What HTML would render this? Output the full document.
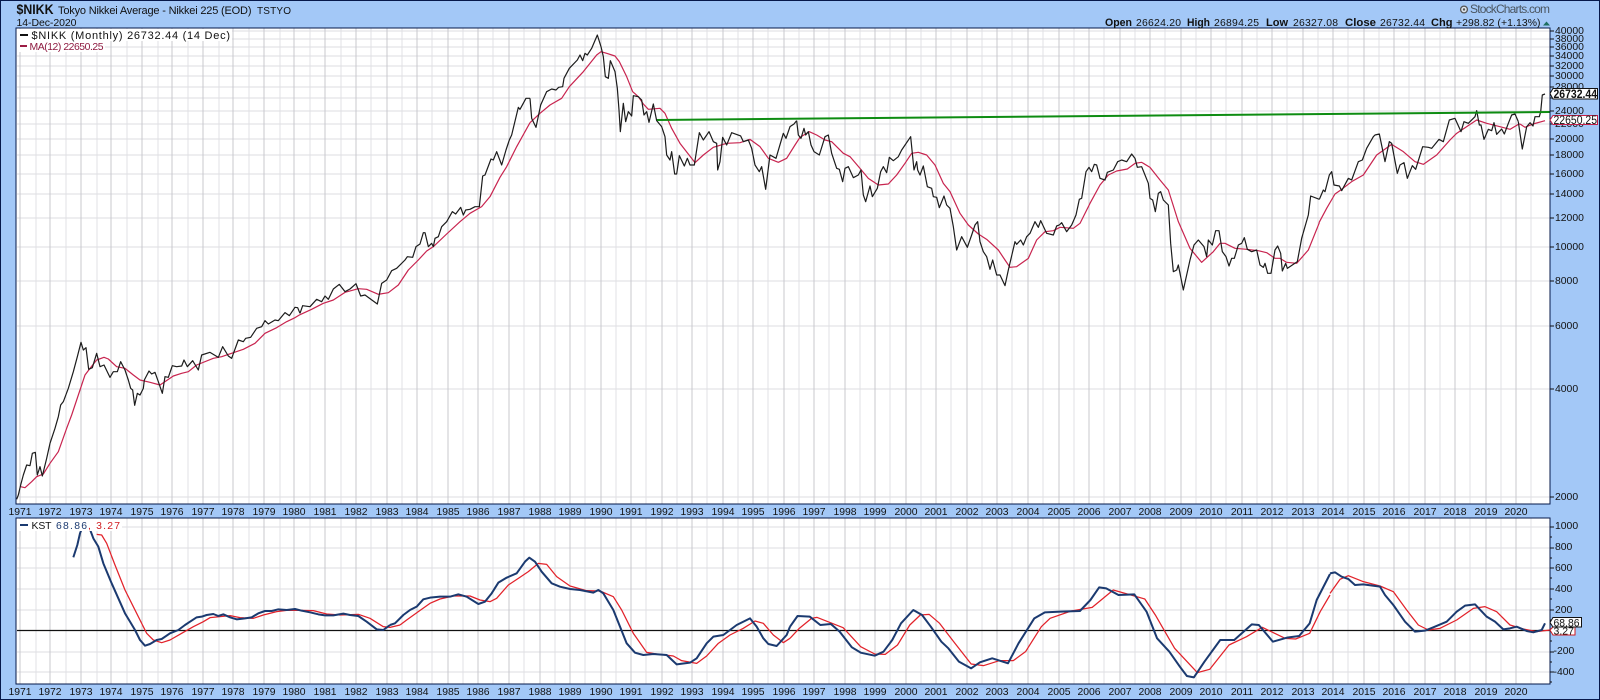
<!DOCTYPE html>
<html><head><meta charset="utf-8"><title>$NIKK</title>
<style>
html,body{margin:0;padding:0;background:#a3c8f7}
svg{display:block;font-family:"Liberation Sans",Arial,sans-serif;font-size:10.4px}
text{fill:#111}
.l{fill:none;vector-effect:non-scaling-stroke;stroke-linejoin:round}
.p{stroke:#1c1c1c;stroke-width:1.2}
.m{stroke:#c8244f;stroke-width:1.2}
.n{stroke:#1b3a70;stroke-width:2}
.r{stroke:#e2222a;stroke-width:1.25}
.b{font-weight:bold}
</style></head><body>
<svg xmlns="http://www.w3.org/2000/svg" width="1600" height="700" viewBox="0 0 1600 700">
<rect width="1600" height="700" fill="#a3c8f7"/>
<rect x="16" y="28" width="1534" height="656" fill="#fff"/>

<!-- half-year grid -->
<path shape-rendering="crispEdges" stroke="#e0e0e4" stroke-width="1" fill="none" d="M36 28V684M66 28V684M97 28V684M127 28V684M158 28V684M188 28V684M219 28V684M249 28V684M280 28V684M310 28V684M341 28V684M371 28V684M402 28V684M432 28V684M463 28V684M493 28V684M524 28V684M555 28V684M585 28V684M616 28V684M646 28V684M677 28V684M707 28V684M738 28V684M768 28V684M799 28V684M829 28V684M860 28V684M890 28V684M921 28V684M951 28V684M982 28V684M1012 28V684M1043 28V684M1074 28V684M1104 28V684M1135 28V684M1165 28V684M1196 28V684M1226 28V684M1257 28V684M1287 28V684M1318 28V684M1348 28V684M1379 28V684M1409 28V684M1440 28V684M1470 28V684M1501 28V684M1531 28V684"/>
<!-- horizontal grid -->
<path shape-rendering="crispEdges" stroke="#dedee2" stroke-width="1" fill="none" d="M17 31H1550M17 39H1550M17 47H1550M17 56H1550M17 66H1550M17 76H1550M17 87H1550M17 98H1550M17 111H1550M17 124H1550M17 139H1550M17 155H1550M17 174H1550M17 194H1550M17 218H1550M17 247H1550M17 281H1550M17 326H1550M17 389H1550M17 497H1550M17 527H1550M17 548H1550M17 568H1550M17 589H1550M17 610H1550M17 652H1550M17 672H1550"/>
<!-- year grid -->
<path shape-rendering="crispEdges" stroke="#c8c8ce" stroke-width="1" fill="none" d="M20 28V684M50 28V684M81 28V684M111 28V684M142 28V684M172 28V684M203 28V684M233 28V684M264 28V684M294 28V684M325 28V684M356 28V684M387 28V684M417 28V684M448 28V684M478 28V684M509 28V684M540 28V684M570 28V684M601 28V684M631 28V684M662 28V684M692 28V684M723 28V684M753 28V684M784 28V684M814 28V684M845 28V684M875 28V684M906 28V684M936 28V684M967 28V684M997 28V684M1028 28V684M1059 28V684M1089 28V684M1120 28V684M1150 28V684M1181 28V684M1211 28V684M1242 28V684M1272 28V684M1303 28V684M1333 28V684M1364 28V684M1394 28V684M1425 28V684M1455 28V684M1486 28V684M1516 28V684"/>

<!-- MA(12) -->
<g transform="translate(0,300) scale(.33333)"><polyline class="l m" points="62,560 75,563 95,545 110,530 130,522 150,490 175,455 200,385 215,345 240,270 255,225 270,205 290,180 312,172 325,177 350,200 375,205 400,225 420,240 450,247 480,255 495,245 520,228 545,220 565,215 590,195 640,175 665,170 700,158 730,148 765,130 795,100 830,83 860,65 885,53 900,44"/></g>
<g transform="translate(290,90) scale(.33333)"><polyline class="l m" points="30,674 65,658 100,640 130,630 165,607 205,596 230,598 265,613 295,608 325,585 355,540 385,510 410,483 430,470 470,432 510,395 540,370 575,350 600,320 630,262 650,230 680,170 720,98"/></g>
<g transform="translate(500,30) scale(.33333)"><polyline class="l m" points="90,278 120,250 150,225 185,205 208,170 250,125 290,75 303,65 320,70 345,78 358,95 380,140 398,185 415,200 430,222 445,238 480,235 495,250 515,295 540,340 585,398 610,375 640,352 680,340 720,338 750,328 780,350 805,385 835,397 860,385 885,345 900,322"/></g>
<g transform="translate(790,110) scale(.33333)"><polyline class="l m" points="30,82 58,65 80,75 105,90 125,95 160,130 180,140 210,175 235,205 265,225 295,222 320,195 345,160 365,130 385,127 410,135 435,165 460,220 480,245 510,310 535,345 565,372 590,388 625,420 645,450 660,472 680,470 715,445 740,390 765,365 790,362 810,352"/></g>
<g transform="translate(1050,110) scale(.33333)"><polyline class="l m" points="30,352 70,355 90,340 120,280 150,225 175,195 200,183 232,177 255,160 275,157 300,172 330,210 355,240 385,335 420,415 455,457 490,425 510,400 525,400 555,415 590,418 625,422 650,428 675,445 690,445 710,457 740,460 775,420 808,338"/></g>
<g transform="translate(1280,100) scale(.33333)"><polyline class="l m" points="117,368 140,325 165,282 185,268 215,245 250,225 290,165 335,133 370,155 405,185 430,193 470,165 510,120 530,100 590,60 620,70 660,80 690,88 715,73 720,72"/></g>
<polyline class="l m" points="1520,124 1525,127.3 1533,124 1545,120.7"/>

<!-- Price -->
<g transform="translate(0,300) scale(.33333)"><polyline class="l p" points="50,598 55,585 62,555 70,525 80,495 90,497 97,460 106,457 112,525 120,500 127,528 140,475 150,430 165,385 175,350 182,315 190,305 205,265 220,215 232,170 243,127 250,150 258,143 266,208 277,203 290,160 300,200 312,195 330,232 340,215 352,215 362,185 375,210 385,240 392,265 398,270 404,316 412,280 420,285 430,265 433,240 447,213 455,222 465,217 475,245 487,280 495,230 505,232 517,197 530,200 545,198 552,180 562,200 578,182 595,210 605,165 630,157 655,172 668,140 685,168 695,175 715,120 730,125 737,115 752,112 770,85 785,80 795,62 805,72 825,60 835,62 855,38 868,47 885,22 893,23 900,40"/></g>
<g transform="translate(290,90) scale(.33333)"><polyline class="l p" points="30,670 38,647 60,650 80,628 95,635 105,618 115,628 130,597 148,583 165,605 180,597 198,581 212,618 225,615 262,642 275,580 290,570 305,542 320,535 345,510 352,500 368,502 378,470 390,462 400,428 405,428 415,470 425,460 430,470 435,445 445,440 455,410 470,395 487,365 497,372 512,352 520,375 527,360 540,358 555,350 568,350 578,258 585,255 603,207 610,210 620,185 635,225 648,180 658,150 665,135 685,52 690,58 708,25 720,25"/></g>
<g transform="translate(500,30) scale(.33333)"><polyline class="l p" points="90,205 95,265 108,292 122,225 140,185 155,177 168,180 176,172 188,170 192,145 208,115 232,90 240,75 248,92 255,70 262,75 275,55 292,15 303,50 310,80 316,140 325,145 331,92 345,125 352,175 357,240 361,305 370,220 377,275 385,245 395,258 400,197 415,200 425,210 432,255 440,245 447,277 460,222 470,272 485,290 495,320 500,375 510,390 515,365 524,432 530,432 538,377 553,408 562,385 570,405 583,405 598,308 610,330 627,305 640,335 650,340 653,420 660,395 668,322 680,345 695,308 722,318 730,335 745,330 755,355 765,405 778,425 785,410 797,478 810,375 828,385 850,310 858,325 870,290 882,282 890,272"/></g>
<g transform="translate(790,110) scale(.33333)"><polyline class="l p" points="20,32 25,75 33,85 42,55 47,75 55,65 63,105 72,125 88,135 105,80 115,75 125,130 140,175 148,178 158,215 165,175 175,170 190,203 205,195 213,180 220,255 227,275 240,228 247,260 262,235 272,185 280,170 290,188 298,142 310,152 325,140 335,120 362,80 372,180 380,155 383,180 390,195 400,168 412,230 425,235 430,260 440,262 448,293 462,258 470,285 480,295 490,350 500,420 515,380 532,412 545,375 555,345 563,335 570,395 580,425 590,440 600,478 608,450 620,495 630,495 645,527 655,480 675,395 680,403 692,390 700,405 710,380 720,370 735,335 745,352 752,332 770,370 790,375 800,348 808,345"/></g>
<g transform="translate(1050,110) scale(.33333)"><polyline class="l p" points="28,345 35,338 50,365 65,345 78,315 88,268 95,265 108,185 117,172 125,185 133,163 140,165 150,205 165,210 172,187 190,180 203,155 215,150 230,155 245,132 255,145 262,172 275,170 295,220 300,265 308,270 316,305 325,250 332,245 340,270 355,285 362,400 370,485 380,480 385,465 400,540 420,450 432,405 445,390 462,410 470,440 475,390 487,405 497,362 507,362 517,425 528,440 537,468 545,445 553,445 565,405 575,400 583,383 592,418 605,425 620,420 630,465 640,472 645,460 653,490 663,490 675,420 683,408 692,430 697,483 707,460 712,475 742,455 755,385 775,315 782,258 808,268"/></g>
<g transform="translate(1280,100) scale(.33333)"><polyline class="l p" points="118,298 130,270 135,275 148,225 155,215 162,255 178,258 185,272 205,235 215,240 235,185 247,180 260,145 280,110 285,105 298,102 315,185 328,125 335,130 352,220 360,195 372,188 382,235 397,197 407,208 428,140 445,142 455,145 477,118 490,125 508,60 525,55 543,95 552,65 565,70 585,50 590,32 598,75 603,75 612,118 625,88 635,92 642,68 650,103 665,87 673,102 685,70 695,45 705,42 715,65"/></g>
<polyline class="l p" points="1518.3,121.7 1522.3,149 1526.7,126.7 1530,122.7 1533,126 1535,116.7 1539.3,116.7 1540.7,111.7 1542.3,95 1545,94"/>

<!-- Green trend line -->
<line x1="657" y1="120" x2="1550" y2="112" stroke="#0e8c12" stroke-width="2"/>

<!-- KST zero -->
<line x1="17" y1="630.5" x2="1550" y2="630.5" stroke="#111" stroke-width="1.2"/>

<!-- KST signal -->
<g transform="translate(0,470) scale(.33333)"><polyline class="l r" points="290,193 305,195 320,220 345,285 375,360 400,410 420,450 440,490 460,510 485,518 510,510 545,490 580,470 610,455 630,443 660,440 690,437 720,443 760,445 790,435 830,425 860,421 900,421 940,422 980,432 1020,435 1075,433 1110,445 1150,470 1170,472 1200,465"/></g>
<g transform="translate(390,530) scale(.33333)"><polyline class="l r" points="30,285 50,270 85,245 120,220 150,207 190,198 240,198 270,210 300,215 320,205 355,165 385,145 415,125 445,100 470,103 500,140 540,168 590,182 630,183 670,200 695,240 730,310 770,367 800,372 850,378 875,392 920,400 950,378 985,340 1020,315 1060,295 1095,273 1120,280 1150,315 1180,338 1200,325"/></g>
<g transform="translate(780,530) scale(.35077,.33333)"><polyline class="l r" points="28.5,325 55,295 90,265 105,262 180,293 230,350 270,372 300,373 335,345 370,285 400,255 425,253 455,280 495,335 545,402 580,407 625,392 665,392 700,365 745,290 770,265 830,243 890,232 950,180 1040,207 1070,255 1125,355 1190,428 1225,418 1280,345 1330,320 1375,292 1440,325 1470,327 1510,310 1540,245 1568,195"/></g>
<g transform="translate(1300,480) scale(.33333)"><polyline class="l r" points="90,340 120,298 145,287 190,305 240,318 280,335 320,390 355,435 385,450 420,445 470,420 520,385 555,380 590,395 630,435 670,447 710,455 750,450"/></g>

<!-- KST main -->
<g transform="translate(0,470) scale(.33333)"><polyline class="l n" points="220,262 232,225 240,190 250,165 265,165 280,205 295,230 310,280 335,340 355,385 375,430 390,455 405,480 420,510 435,527 450,522 470,510 485,507 510,490 535,480 555,465 570,455 590,442 605,440 620,435 640,432 655,438 670,433 690,442 710,448 735,445 755,442 775,430 795,423 815,423 835,418 860,420 885,417 905,422 930,427 955,433 975,436 1000,436 1030,431 1050,435 1075,438 1100,455 1130,478 1150,480 1170,465"/></g>
<g transform="translate(390,530) scale(.33333)"><polyline class="l n" points="0,285 15,280 40,255 60,240 80,230 100,208 120,203 150,200 180,200 205,193 230,200 265,222 285,215 305,190 325,158 350,143 380,130 405,95 418,83 435,95 455,125 485,160 510,170 540,177 570,180 610,188 625,180 640,190 670,240 690,290 710,340 735,368 760,375 790,372 830,375 860,403 900,398 920,385 950,340 970,320 1000,315 1040,285 1080,265 1100,290 1120,325 1135,342 1160,348 1190,315 1200,290"/></g>
<g transform="translate(780,530) scale(.35077,.33333)"><polyline class="l n" points="28.5,290 50,258 85,260 115,285 145,282 170,305 205,352 230,368 270,377 295,365 320,330 345,280 380,240 405,255 430,290 460,335 480,355 510,395 545,415 570,397 605,385 650,400 680,340 725,265 755,247 800,245 855,243 885,210 910,172 930,175 965,195 1010,193 1045,245 1075,325 1110,365 1140,410 1160,438 1180,442 1210,395 1255,330 1295,330 1345,283 1365,285 1405,335 1445,323 1480,318 1510,280 1530,210 1568,132"/></g>
<g transform="translate(1300,480) scale(.33333)"><polyline class="l n" points="90,280 105,277 125,290 145,297 165,315 190,313 240,320 255,345 280,375 315,425 345,455 375,452 400,442 440,425 470,395 495,377 525,373 560,410 585,425 610,448 630,445 650,440 680,453 700,457 725,450 735,430"/></g>

<!-- Legends -->
<rect x="17" y="29" width="215" height="12" fill="#fff"/>
<rect x="17" y="41" width="88" height="11" fill="#fff"/>
<rect x="17" y="519" width="105" height="12" fill="#fff"/>
<rect x="20" y="34" width="8" height="2" fill="#111"/>
<text x="31.5" y="39" textLength="198.5" font-size="11">$NIKK (Monthly) 26732.44 (14 Dec)</text>
<rect x="20" y="45" width="7" height="2" fill="#9c1c44"/>
<text x="29.5" y="50" textLength="74" style="fill:#8e1a40">MA(12) 22650.25</text>
<rect x="20" y="524" width="8" height="2" fill="#1b3a70"/>
<text x="31.5" y="529" textLength="20">KST</text>
<text x="56" y="529" textLength="31" style="fill:#1b3a70">68.86</text>
<text x="88" y="529" textLength="32" style="fill:#d01c20">, 3.27</text>

<!-- Band between panels -->
<rect x="16" y="504" width="1534" height="14" fill="#a3c8f7"/>
<rect x="1" y="684" width="1598" height="15" fill="#a3c8f7"/>

<!-- Panel borders -->
<path shape-rendering="crispEdges" fill="none" stroke="#06184a" stroke-width="1" d="M16 28H1550V504H16ZM16 518H1550V684H16Z"/>
<rect x="0.5" y="0.5" width="1599" height="699" fill="none" stroke="#06184a" stroke-width="1"/>

<!-- Axis ticks -->
<path shape-rendering="crispEdges" fill="none" stroke="#111" stroke-width="1" d="M1550 31h4M1550 39h4M1550 47h4M1550 56h4M1550 66h4M1550 76h4M1550 87h4M1550 98h4M1550 111h4M1550 124h4M1550 139h4M1550 155h4M1550 174h4M1550 194h4M1550 218h4M1550 247h4M1550 281h4M1550 326h4M1550 389h4M1550 497h4M1550 527h4M1550 548h4M1550 568h4M1550 589h4M1550 610h4M1550 631h4M1550 652h4M1550 672h4M1550 537h2M1550 558h2M1550 578h2M1550 599h2M1550 620h2M1550 641h2M1550 662h2M1550 682h2"/>

<!-- Header -->
<text x="16.5" y="14" class="b" font-size="14" textLength="37" lengthAdjust="spacingAndGlyphs">$NIKK</text>
<text x="58" y="14" font-size="11" textLength="193.5">Tokyo Nikkei Average - Nikkei 225 (EOD)</text>
<text x="257" y="14" font-size="10" textLength="34">TSTYO</text>
<text x="16.5" y="26" textLength="60" font-size="10.5">14-Dec-2020</text>

<circle cx="1464" cy="9.5" r="3.4" fill="#dfe6ee" stroke="#555" stroke-width="1.3"/>
<circle cx="1464" cy="9.5" r="1.2" fill="#555"/>
<text x="1470" y="13" font-size="12" textLength="80" style="fill:#4a5560">StockCharts.com</text>

<text x="1105" y="26" class="b" font-size="11" textLength="27" lengthAdjust="spacingAndGlyphs">Open</text>
<text x="1136" y="26" textLength="45">26624.20</text>
<text x="1187" y="26" class="b" font-size="11" textLength="23" lengthAdjust="spacingAndGlyphs">High</text>
<text x="1214" y="26" textLength="45">26894.25</text>
<text x="1266" y="26" class="b" font-size="11" textLength="22" lengthAdjust="spacingAndGlyphs">Low</text>
<text x="1293" y="26" textLength="45">26327.08</text>
<text x="1345" y="26" class="b" font-size="11" textLength="31" lengthAdjust="spacingAndGlyphs">Close</text>
<text x="1380" y="26" textLength="45">26732.44</text>
<text x="1431" y="26" class="b" font-size="11" textLength="21.5" lengthAdjust="spacingAndGlyphs">Chg</text>
<text x="1456" y="26" textLength="84.5">+298.82 (+1.13%)</text>
<path d="M1543 25.5L1546.5 21.5L1550 25.5Z" fill="#1e6e60"/>

<!-- Right axis labels -->
<text x="1555" y="34">40000</text><text x="1555" y="42">38000</text><text x="1555" y="50">36000</text><text x="1555" y="59">34000</text><text x="1555" y="69">32000</text><text x="1555" y="79">30000</text><text x="1555" y="90">28000</text><text x="1555" y="114">24000</text><text x="1555" y="127">22000</text><text x="1555" y="142">20000</text><text x="1555" y="158">18000</text><text x="1555" y="177">16000</text><text x="1555" y="197">14000</text><text x="1555" y="221">12000</text><text x="1555" y="250">10000</text><text x="1555" y="284">8000</text><text x="1555" y="329">6000</text><text x="1555" y="392">4000</text><text x="1555" y="500">2000</text>
<text x="1555" y="529">1000</text><text x="1555" y="550">800</text><text x="1555" y="571">600</text><text x="1555" y="592">400</text><text x="1555" y="613">200</text><text x="1553.5" y="654">-200</text><text x="1553.5" y="675">-400</text>

<!-- Value flags -->
<path d="M1550 93.5L1553 88.5H1597.5V99H1553Z" fill="#fff" stroke="#111" stroke-width="1"/>
<text x="1553.5" y="98" class="b" font-size="12" textLength="43.5" lengthAdjust="spacingAndGlyphs">26732.44</text>
<path d="M1550 120L1553 115.5H1597.5V124.5H1553Z" fill="#fff" stroke="#c42048" stroke-width="1"/>
<text x="1553.5" y="124" font-size="11.5" textLength="43.5" lengthAdjust="spacingAndGlyphs">22650.25</text>
<path d="M1550 630L1553 627H1575V635H1553Z" fill="#fff" stroke="#d01c20" stroke-width="1"/>
<text x="1553.5" y="634.5" font-size="10.5">3.27</text>
<path d="M1550 622.5L1553 617.5H1581.5V627H1553Z" fill="#fff" stroke="#111" stroke-width="1"/>
<text x="1553.5" y="626.5" font-size="11" textLength="26" lengthAdjust="spacingAndGlyphs">68.86</text>

<!-- Year labels -->
<g text-anchor="middle">
<text x="20" y="515">1971</text><text x="50" y="515">1972</text><text x="81" y="515">1973</text><text x="111" y="515">1974</text><text x="142" y="515">1975</text><text x="172" y="515">1976</text><text x="203" y="515">1977</text><text x="233" y="515">1978</text><text x="264" y="515">1979</text><text x="294" y="515">1980</text><text x="325" y="515">1981</text><text x="356" y="515">1982</text><text x="387" y="515">1983</text><text x="417" y="515">1984</text><text x="448" y="515">1985</text><text x="478" y="515">1986</text><text x="509" y="515">1987</text><text x="540" y="515">1988</text><text x="570" y="515">1989</text><text x="601" y="515">1990</text><text x="631" y="515">1991</text><text x="662" y="515">1992</text><text x="692" y="515">1993</text><text x="723" y="515">1994</text><text x="753" y="515">1995</text><text x="784" y="515">1996</text><text x="814" y="515">1997</text><text x="845" y="515">1998</text><text x="875" y="515">1999</text><text x="906" y="515">2000</text><text x="936" y="515">2001</text><text x="967" y="515">2002</text><text x="997" y="515">2003</text><text x="1028" y="515">2004</text><text x="1059" y="515">2005</text><text x="1089" y="515">2006</text><text x="1120" y="515">2007</text><text x="1150" y="515">2008</text><text x="1181" y="515">2009</text><text x="1211" y="515">2010</text><text x="1242" y="515">2011</text><text x="1272" y="515">2012</text><text x="1303" y="515">2013</text><text x="1333" y="515">2014</text><text x="1364" y="515">2015</text><text x="1394" y="515">2016</text><text x="1425" y="515">2017</text><text x="1455" y="515">2018</text><text x="1486" y="515">2019</text><text x="1516" y="515">2020</text>
<text x="20" y="695">1971</text><text x="50" y="695">1972</text><text x="81" y="695">1973</text><text x="111" y="695">1974</text><text x="142" y="695">1975</text><text x="172" y="695">1976</text><text x="203" y="695">1977</text><text x="233" y="695">1978</text><text x="264" y="695">1979</text><text x="294" y="695">1980</text><text x="325" y="695">1981</text><text x="356" y="695">1982</text><text x="387" y="695">1983</text><text x="417" y="695">1984</text><text x="448" y="695">1985</text><text x="478" y="695">1986</text><text x="509" y="695">1987</text><text x="540" y="695">1988</text><text x="570" y="695">1989</text><text x="601" y="695">1990</text><text x="631" y="695">1991</text><text x="662" y="695">1992</text><text x="692" y="695">1993</text><text x="723" y="695">1994</text><text x="753" y="695">1995</text><text x="784" y="695">1996</text><text x="814" y="695">1997</text><text x="845" y="695">1998</text><text x="875" y="695">1999</text><text x="906" y="695">2000</text><text x="936" y="695">2001</text><text x="967" y="695">2002</text><text x="997" y="695">2003</text><text x="1028" y="695">2004</text><text x="1059" y="695">2005</text><text x="1089" y="695">2006</text><text x="1120" y="695">2007</text><text x="1150" y="695">2008</text><text x="1181" y="695">2009</text><text x="1211" y="695">2010</text><text x="1242" y="695">2011</text><text x="1272" y="695">2012</text><text x="1303" y="695">2013</text><text x="1333" y="695">2014</text><text x="1364" y="695">2015</text><text x="1394" y="695">2016</text><text x="1425" y="695">2017</text><text x="1455" y="695">2018</text><text x="1486" y="695">2019</text><text x="1516" y="695">2020</text>
</g>
</svg>
</body></html>
